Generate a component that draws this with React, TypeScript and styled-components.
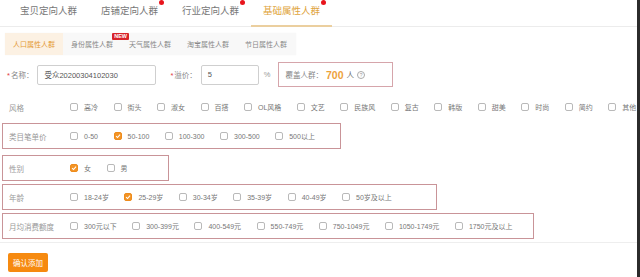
import React from 'react';
import styled, { createGlobalStyle, css } from 'styled-components';

const GlobalStyle = createGlobalStyle`
  html, body {
    margin: 0;
    padding: 0;
    background: #fff;
  }
  body {
    font-family: "Liberation Sans", "Noto Sans CJK SC", sans-serif;
    color: #666;
  }
`;

const Page = styled.div`
  width: 637px;
  height: 277px;
  border-right: 3px solid #2b2b2b;
  overflow: hidden;
  display: flex;
  flex-direction: column;
`;

const TabBar = styled.div`
  display: flex;
  height: 27px;
  padding-left: 8px;
  border-bottom: 1px solid #ececec;
  box-sizing: border-box;
`;

const Tab = styled.div<{ $active?: boolean }>`
  position: relative;
  width: 81px;
  display: flex;
  justify-content: center;
  padding-top: 5px;
  font-size: 9.5px;
  line-height: 12px;
  color: ${({ $active }) => ($active ? '#e0a43c' : '#777')};
  ${({ $active }) =>
    $active &&
    css`
      &::after {
        content: '';
        position: absolute;
        left: 0;
        right: 0;
        bottom: -1px;
        height: 2px;
        background: #ebcf9f;
      }
    `}
`;

const TabText = styled.span`
  position: relative;
`;

const Dot = styled.i`
  position: absolute;
  right: -6px;
  top: -5px;
  width: 5px;
  height: 5px;
  border-radius: 50%;
  background: #e8141c;
`;

const SubTabs = styled.div`
  display: flex;
  width: 291px;
  height: 22px;
  margin: 6px 0 0 5px;
  background: #f8f8f8;
  box-shadow: 0 0 1px rgba(0, 0, 0, 0.06);
`;

const SubTab = styled.div<{ $active?: boolean }>`
  position: relative;
  width: 58px;
  display: flex;
  align-items: center;
  justify-content: center;
  font-size: 7px;
  white-space: nowrap;
  color: ${({ $active }) => ($active ? '#e49a35' : '#888')};
  background: ${({ $active }) => ($active ? '#fcf1e3' : 'transparent')};
`;

const NewBadge = styled.span`
  position: absolute;
  top: 0;
  right: -8px;
  height: 7px;
  padding: 0 2px;
  background: #d8232a;
  color: #fff;
  font-size: 5.5px;
  font-weight: bold;
  line-height: 7px;
  border-radius: 1px;
`;

const FormRow = styled.div`
  display: flex;
  align-items: center;
  height: 25px;
  margin-top: 7px;
  padding-left: 7px;
  font-size: 7.5px;
  white-space: nowrap;
`;

const Label = styled.span<{ $ml?: number }>`
  color: #888;
  margin: 0 4px 0 ${({ $ml }) => $ml ?? 0}px;
`;

const Star = styled.span`
  color: #e23c3c;
  margin-right: 1px;
`;

const Input = styled.div<{ $w: number }>`
  width: ${({ $w }) => $w}px;
  height: 20px;
  box-sizing: border-box;
  border: 1px solid #cfcfcf;
  border-radius: 2px;
  padding-left: 6px;
  display: flex;
  align-items: center;
  color: #555;
`;

const Unit = styled.span`
  margin: 0 7px 0 5px;
  color: #999;
`;

const CoverBox = styled.div`
  width: 115px;
  height: 25px;
  box-sizing: border-box;
  border: 1px solid #d6a5ab;
  display: flex;
  align-items: center;
  padding-left: 7px;
  gap: 3px;
`;

const CoverLabel = styled.span`
  color: #888;
`;

const Count = styled.span`
  font-size: 10.5px;
  font-weight: bold;
  color: #eda23c;
`;

const Help = styled.span`
  width: 6px;
  height: 6px;
  border: 0.8px solid #aaa;
  border-radius: 50%;
  font-size: 5px;
  line-height: 6px;
  text-align: center;
  color: #999;
`;

const Row = styled.div<{ $gap: number; $w?: number }>`
  display: flex;
  align-items: center;
  flex-shrink: 0;
  height: 26px;
  box-sizing: border-box;
  margin: ${({ $gap }) => $gap}px 0 0 2px;
  padding-left: 6px;
  font-size: 7px;
  white-space: nowrap;
  width: ${({ $w }) => ($w ? `${$w}px` : 'auto')};
  border: 1px solid ${({ $w }) => ($w ? '#c99498' : 'transparent')};
`;

const RowLabel = styled.span`
  width: 61px;
  flex-shrink: 0;
  font-size: 7.5px;
  color: #999;
`;

const Item = styled.span`
  display: flex;
  align-items: center;
  flex-shrink: 0;
  margin-right: 15.5px;
  color: #777;
`;

const Box = styled.span<{ $on?: boolean }>`
  width: 8px;
  height: 8px;
  flex-shrink: 0;
  box-sizing: border-box;
  margin-right: 6px;
  border-radius: 2px;
  border: 1px solid ${({ $on }) => ($on ? '#ee8c1c' : '#b9b9b9')};
  background: ${({ $on }) => ($on ? '#f39426' : '#fff')};
  display: flex;
  align-items: center;
  justify-content: center;
`;

const Divider = styled.div`
  margin-top: 3px;
  border-top: 1px solid #eeeeee;
`;

const Button = styled.button`
  margin: 10px 0 0 8px;
  width: 40px;
  height: 19px;
  padding: 0;
  border: none;
  border-radius: 2px;
  background: #f68a10;
  color: #fff;
  font-family: inherit;
  font-size: 7.5px;
`;

const Check = () => (
  <svg width="6" height="6" viewBox="0 0 10 10">
    <path d="M1.8 5.2 L4.2 7.5 L8.4 2.6" fill="none" stroke="#fff" strokeWidth="1.7" />
  </svg>
);

type Opt = { text: string; on?: boolean };

const rows: { label: string; gap: number; w?: number; opts: Opt[] }[] = [
  {
    label: '风格',
    gap: 7,
    opts: ['高冷', '街头', '淑女', '百搭', 'OL风格', '文艺', '民族风', '复古', '韩版', '甜美', '时尚', '简约', '其他'].map(
      (t) => ({ text: t })
    ),
  },
  {
    label: '类目笔单价',
    gap: 3,
    w: 339,
    opts: [{ text: '0-50' }, { text: '50-100', on: true }, { text: '100-300' }, { text: '300-500' }, { text: '500以上' }],
  },
  { label: '性别', gap: 6, w: 167, opts: [{ text: '女', on: true }, { text: '男' }] },
  {
    label: '年龄',
    gap: 3,
    w: 435,
    opts: [
      { text: '18-24岁' },
      { text: '25-29岁', on: true },
      { text: '30-34岁' },
      { text: '35-39岁' },
      { text: '40-49岁' },
      { text: '50岁及以上' },
    ],
  },
  {
    label: '月均消费额度',
    gap: 3,
    w: 532,
    opts: ['300元以下', '300-399元', '400-549元', '550-749元', '750-1049元', '1050-1749元', '1750元及以上'].map((t) => ({
      text: t,
    })),
  },
];

const tabs = [
  { name: '宝贝定向人群' },
  { name: '店铺定向人群', dot: true },
  { name: '行业定向人群', dot: true },
  { name: '基础属性人群', dot: true, active: true },
];

const subTabs = ['人口属性人群', '身份属性人群', '天气属性人群', '淘宝属性人群', '节日属性人群'];

export default function App() {
  return (
    <Page>
      <GlobalStyle />
      <TabBar>
        {tabs.map((t) => (
          <Tab key={t.name} $active={t.active}>
            <TabText>
              {t.name}
              {t.dot && <Dot />}
            </TabText>
          </Tab>
        ))}
      </TabBar>

      <SubTabs>
        {subTabs.map((s, i) => (
          <SubTab key={s} $active={i === 0}>
            {s}
            {i === 1 && <NewBadge>NEW</NewBadge>}
          </SubTab>
        ))}
      </SubTabs>

      <FormRow>
        <Label>
          <Star>*</Star>名称：
        </Label>
        <Input $w={119}>受众20200304102030</Input>
        <Label $ml={14}>
          <Star>*</Star>溢价：
        </Label>
        <Input $w={58}>5</Input>
        <Unit>%</Unit>
        <CoverBox>
          <CoverLabel>覆盖人群：</CoverLabel>
          <Count>700</Count>
          <span>人</span>
          <Help>?</Help>
        </CoverBox>
      </FormRow>

      {rows.map((r) => (
        <Row key={r.label} $gap={r.gap} $w={r.w}>
          <RowLabel>{r.label}</RowLabel>
          {r.opts.map((o) => (
            <Item key={o.text}>
              <Box $on={o.on}>{o.on && <Check />}</Box>
              {o.text}
            </Item>
          ))}
        </Row>
      ))}

      <Divider />
      <Button>确认添加</Button>
    </Page>
  );
}
